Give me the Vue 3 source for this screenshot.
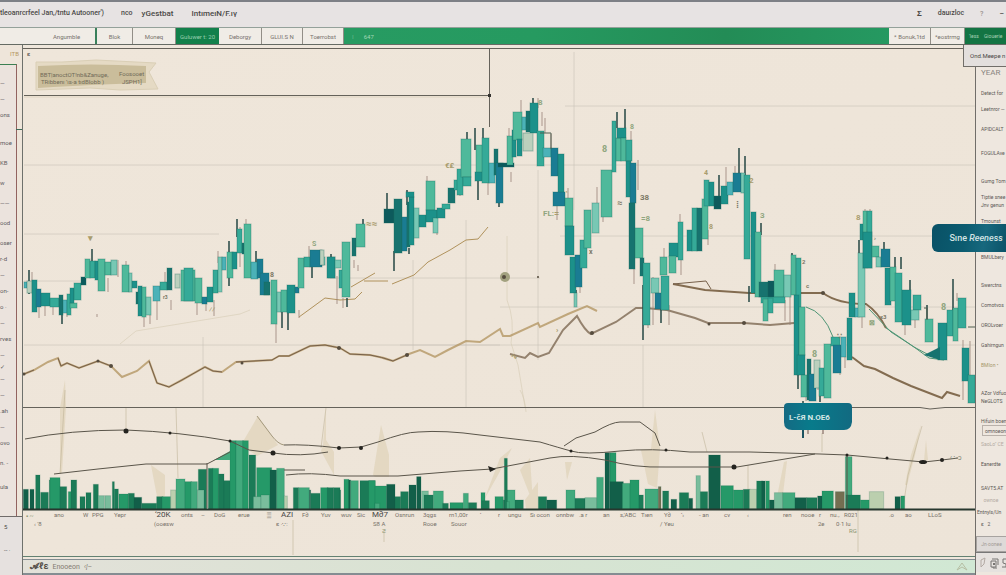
<script setup>
const tones = {
  d: '#17736f', t: '#1c918a', m: '#35aa98', g: '#4fb99b', l: '#78c8b4', p: '#bcd0bd',
  b: '#1a7c93', c: '#4bb2b8', e: '#2f9f7c', k: '#0d5a5c'
}

const parse = (source) =>
  source.trim().split(/\s*;\s*/).filter(Boolean).map((row) => {
    const [tone, ...n] = row.split(/[ ,]+/)
    return { tone, n: n.map(Number) }
  })

const candles = parse(`
c 24,282,3,6; p 27,281,5,12; t 32,280,5,32; b 36,289,5,18; t 41,293,9,13; m 50,298,9,9; d 59,295,4,20; c 63,300,4,13; m 67,294,4,21; g 70,303,7,5;
t 70,288,4,15; m 74,283,7,17; k 81,277,5,8; g 85,259,5,19; m 90,261,5,17; t 95,261,4,19; g 98,259,7,32; g 105,262,6,13; l 111,260,6,15; g 122,265,7,27; l 129,273,3,19;
t 132,281,5,7; d 136,292,5,12; t 138,286,4,30; g 142,287,4,30; l 146,297,5,18; c 153,286,7,15; m 160,282,7,8; d 167,268,5,22; p 175,274,5,14; g 181,270,14,31; m 184,268,9,33;
g 195,278,7,25; b 202,297,5,7; t 207,287,6,15; m 213,270,5,23; l 218,257,4,35; c 222,257,4,13; g 227,252,6,26; t 232,252,5,17; m 237,229,5,24; d 242,243,2,11; g 244,224,7,54;
c 251,262,7,17; b 257,259,6,19; b 260,273,9,22; d 264,282,6,13; g 271,280,6,44; l 277,292,4,20; g 281,290,6,22; t 287,285,8,28; b 295,287,4,6; g 298,258,6,30; m 304,257,6,10;
b 310,250,12,17; l 321,257,4,8; b 328,257,7,21; p 320,250,4,15; t 327,257,8,21; l 335,260,6,8; m 339,270,4,18; g 342,242,8,55; d 352,238,4,18; g 356,224,9,23; k 384,209,10,14;
d 394,199,8,54; b 402,217,5,34; d 407,202,3,45; t 409,197,5,48; t 406,192,8,5; l 414,208,5,30; t 419,215,7,12; g 426,181,9,29; t 426,210,11,12; l 433,218,5,15; t 437,208,8,10; m 442,204,8,5;
d 448,188,7,15; m 454,180,4,10; m 457,169,6,26; g 461,139,10,38; m 463,177,8,9; g 476,145,7,28; t 475,172,8,9; m 482,138,7,45; c 489,163,6,20; d 494,149,4,26; b 496,163,7,40; k 498,163,16,4;
g 507,136,6,29; t 512,130,4,27; g 513,112,9,28; t 517,139,5,17; c 522,117,4,13; d 526,111,5,21; t 530,103,8,30; p 523,133,10,18; m 537,131,7,35; c 543,148,8,9; b 551,148,7,28;
t 558,154,6,41; b 553,192,12,14; g 565,198,8,28; t 565,226,9,29; t 570,257,6,36; b 575,255,7,32; l 574,293,3,14; m 580,240,7,28; g 584,210,7,38; l 592,203,7,30; g 601,170,11,47;
m 612,121,4,51; g 616,138,5,23; t 617,128,9,10; g 621,138,5,23; m 626,140,6,21; t 626,161,5,36; b 630,163,6,40; d 629,203,6,66; g 635,228,8,30; d 640,258,4,18; m 643,263,7,62; l 651,278,8,15;
b 655,293,7,16; m 661,276,8,34; g 660,257,7,18; t 669,243,10,14; g 669,256,7,17; m 678,222,5,38; t 687,230,5,21; m 692,208,5,43; d 697,208,5,43; g 702,199,6,40; m 704,180,5,26;
t 709,182,5,24; k 714,196,7,13; t 721,186,7,18; c 727,182,6,13; b 733,173,8,19; l 741,173,4,20; m 744,175,6,84; t 751,212,5,81; g 755,232,6,65; d 759,282,9,15; k 768,281,6,16;
g 774,270,10,27; l 784,275,7,22; m 761,297,24,6; g 763,299,5,22; m 768,298,5,15; g 791,255,5,40; m 796,258,5,67; t 794,295,5,80; g 799,307,6,48; t 797,355,8,20; g 801,375,6,22;
d 807,359,4,41; b 809,374,7,27; p 814,360,6,28; m 819,368,5,28; g 824,344,7,54; m 831,337,9,9; b 833,345,8,28; c 841,337,5,20; t 847,318,5,42; t 849,293,6,24; c 855,308,5,9;
l 858,253,7,64; t 860,224,4,16; g 863,211,4,57; m 867,211,5,57; t 863,232,9,36; g 872,246,7,11; l 876,257,5,10; b 881,249,9,18; t 885,268,6,37; g 890,267,6,34; m 895,273,7,49;
t 902,290,9,35; m 913,295,8,15; l 911,310,8,10; g 925,319,8,23; t 938,323,9,37; m 947,310,6,26; g 953,308,5,33; m 958,298,8,30; t 962,348,7,33; m 968,375,7,28
`)

const wicks = parse(`
d 29,270,24; n 32,272,12; n 39,306,12; n 45,306,10; n 53,306,9; d 62,308,16; n 67,309,8; d 92,249,18; n 97,314,3; n 118,260,17; n 126,261,5; n 108,278,14; n 144,314,13; n 150,310,14; n 157,300,20;
n 165,272,17; n 171,300,10; n 197,300,15; n 206,302,9; n 214,300,16; n 218,251,12; d 229,241,45; d 237,219,18; n 240,227,40; n 246,219,6; d 256,251,12; n 276,322,21; d 282,310,18; d 288,312,18; n 299,310,8;
n 309,246,20; d 312,265,13; d 331,254,8; n 337,276,28; n 343,298,10; d 347,298,9; n 354,260,8; d 363,219,6; n 358,265,6; d 387,193,17; d 394,251,20; d 407,190,15; d 409,248,6; n 427,176,6; n 437,228,7; d 450,196,6;
d 467,132,8; n 460,188,8; d 475,128,22; d 478,180,20; d 483,128,12; n 488,181,14; d 499,195,12; n 511,172,10; n 509,128,9; n 521,100,12; d 533,98,8; n 538,98,10; n 542,112,14; n 545,118,15; n 551,134,14; n 557,200,20;
n 568,188,14; d 576,290,14; n 580,285,8; n 597,187,18; n 603,214,8; d 617,112,16; d 625,109,20; n 631,131,10; n 638,160,30; n 634,264,20; d 643,285,55; n 648,320,8; d 661,305,18; n 653,277,48; n 669,305,20;
n 664,248,10; n 680,214,8; n 681,260,15; n 708,230,15; d 719,175,34; d 739,148,28; d 745,156,22; n 726,167,20; n 735,166,10; d 761,223,12; d 749,286,16; n 775,264,10; n 785,300,21; n 790,275,50; d 792,253,30; d 798,374,15;
n 818,375,15; d 820,388,14; n 840,360,15; n 845,350,18; d 859,240,20; n 862,300,28; n 865,209,6; n 870,209,6; d 884,242,9; d 895,257,15; d 901,257,12; d 910,280,10; n 905,322,13; n 915,310,18; d 927,305,20;
d 953,279,35; n 957,293,8; n 963,340,60; n 970,341,40; d 803,401,37; n 806,389,12
`)

const notes = [
  [88, 241, '▾', 'y', 9], [163, 299, 'r3', 'q', 5], [270, 277, '8', 'q', 7], [312, 246, 'S', 'g', 7], [445, 168, '€₤', 'y', 8], [366, 227, '≈≈', 'y', 10],
  [538, 105, '8', 'g', 8], [543, 216, 'FL:', 'g', 8], [554, 217, '=', 'y', 9], [602, 152, '8', 'g', 9], [630, 129, '8', 'g', 7], [640, 200, '38', 'q', 8], [641, 221, '=8', 'g', 8], [617, 206, '≈', 'q', 9],
  [704, 175, '4', 'y', 7], [749, 183, '2', 'y', 8], [760, 218, '3', 'g', 8], [802, 264, '2', 'q', 6], [806, 288, 'c', 'q', 6], [812, 357, '8', 'g', 9], [837, 339, '∵', 'q', 8], [856, 220, '8', 'y', 8],
  [880, 319, 'x3', 'q', 6], [874, 240, '›', 'q', 6], [941, 310, '8', 'g', 9], [589, 254, 'x', 'q', 7], [566, 197, '‛', 'y', 7], [556, 332, '›', 'y', 8], [511, 359, '∿', 'y', 8], [209, 312, '⁄⁄', 'y', 7], [709, 229, '8', 'y', 7], [736, 208, '⁞', 'q', 9], [869, 325, '⊠', 'g', 7]
]

const bars = parse(`
K 70,15,298;K 90,12,298;D 107,13,255;D 122,23,307;D 148,32,270;M 150,30,263;D 180,20,290;M 205,10,305;D 213,17,270;D 240,15,320;D 258,15,308;D 280,15,283;L 295,18,317;L 315,17,317;D 337,6,275;D 343,12,297;M 357,28,312;D 385,18,310;K 402,23,322;
D 425,45,340;D 470,18,320;M 486,26,320;P 512,16,300;G 528,27,267;M 555,20,275;G 573,19,275;D 595,25,238;L 592,20,300;D 625,14,235;M 638,18,235;D 655,17,252;D 672,20,272;M 690,18,152;G 708,22,152;M 728,17,152;D 747,20,195;M 770,45,233;
K 810,20,240;G 830,23,235;L 760,23,320;L 783,25,315;P 853,9,318;D 880,16,293;G 896,32,293;K 928,4,300;D 932,28,310;M 962,22,293;D 982,18,293;D 1000,20,293;D 1018,4,300;
M 1032,15,268;K 1046,6,270;G 1052,23,272;D 1080,45,272;M 1106,20,272;M 1125,35,288;G 1125,14,340;K 1160,25,283;D 1185,17,320;D 1202,23,305;K 1227,21,285;K 1250,13,260;L 1265,20,303;D 1272,28,315;G 1300,30,303;D 1328,17,340;
M 1350,40,338;G 1390,15,310;D 1405,25,338;M 1443,12,308;D 1445,23,332;M 1485,25,320;D 1510,60,330;G 1520,25,300;D 1513,9,205;G 1520,8,335;D 1615,25,320;K 1640,30,330;G 1698,27,300;D 1725,30,325;L 1755,35,323;G 1790,20,262;M 1830,18,188;K 1815,14,188;
K 1830,40,275;G 1867,23,280;M 1890,27,270;D 1917,13,315;G 1935,40,297;N 1975,8,290;D 1988,18,303;K 2013,17,328;D 2038,28,308;K 2066,12,325;D 2095,28,305;L 2088,13,257;K 2126,35,195;M 2163,37,287;M 2200,30,300;D 2230,20,298;P 2248,22,298;
D 2270,18,273;K 2285,10,273;M 2297,11,273;K 2308,15,330;L 2323,25,308;G 2348,37,308;K 2385,35,323;D 2420,31,323;K 2453,13,318;M 2466,34,303;N 2506,27,305;G 2536,20,200;D 2538,43,315;M 2581,27,330;P 2608,43,305;K 2685,16,320;M 2703,11,318
`.replace(/\n/g, ''))
const barTones = { K: '#125f49', D: '#1b7b57', M: '#259968', G: '#42aa7d', L: '#79bd9c', P: '#bbcfae', N: '#746e51' }

const axis = [
  [54, 'ano'], [83, 'W'], [92, 'PPG'], [114, 'Yepr'], [155, '‘20K', 1], [181, 'onts'], [201, '–'], [214, 'DoG'], [238, 'erue'], [267, '▒'], [281, 'AZI', 1], [302, 'F∂'], [321, 'Yuv'],
  [341, 'wuv'], [357, 'Sic'], [372, 'M∂7', 1], [395, 'Osnrun'], [423, '3qgs'], [449, 'rn1,00r'], [480, '‘'], [498, 'r'], [508, 'ungu', 0], [530, 'Sı ocon'], [556, 'onnbw'], [579, '.a r'], [603, 'an'],
  [620, "s,'ABC"], [641, 'Tıen'], [664, 'Y∂'], [681, '‘›'], [699, '- an'], [724, 'cv'], [747, '‹'], [783, 'ren'], [801, 'nooe'], [819, 'r'], [830, 'nu.,'], [844, 'R021'], [889, '.o'], [905, 'ao'], [928, 'LLoS']
]
const subAxis = [[34, "‹ '8"], [154, '(ooesw'], [276, 'ε ·∵:'], [373, 'S8 A'], [423, 'Rooe'], [451, 'Souor'], [660, '/ Yeu'], [818, '2e'], [836, '0·1 lu']]

const leftRail = [
  ['—', 16], ['—', 16], ['ons', 28], ['moe', 20], ['KB', 20], ['w', 20], ['——', 20], ['ood', 20], ['oser', 16], ['r-d', 16], ['—', 16], ['on-', 16], ['o ·', 16], ['—', 16], ['rves', 16], ['—', 12], ['✓', 12], ['—', 16], ['—', 16],
  ['.ah', 16], ['—', 16], ['ovo', 20], ['n. -', 24], ['ula', 20]
]
const rightRail = [
  ['YEAR', 20], ['Detect for', 16], ['Leetnror —', 20], ['APIDCALT', 24], ['FOGULAve', 28], ['Gurng Tom', 16], ['Tiptie snee', 8], ['Jnv genun', 16], ['Tmounst', 36], ['BMULbery', 28],
  ['Swerctns', 20], ['Comotvos', 20], ['OROLvoer', 20], ['Gahirngun', 20], ['BMIon  •', 28], ['AZor Vdfuo', 8], ['NeGLOTS', 20], ['Hifuin boen', 8]
]
const leftTabs = ['Angumble', 'Blok', 'Moneq', 'Guluwer t: 20', 'Deborgy', 'GLUI.S N', 'Toerrobst']
</script>

<template>
  <div class="app">
    <header class="title">
      <nav class="menu" aria-label="Workspace">
        <a href="#" class="path">tleoanrcrfeel Jan,/tntu Autooner')</a>
        <a href="#">nco</a>
        <a href="#" class="wide">yGestbat</a>
        <a href="#" class="wide">IntımeıN/F.ıγ</a>
      </nav>
      <div class="tools">
        <button type="button" aria-label="Sum">&#x1D6BA;</button>
        <a href="#">dauızloc</a>
        <button type="button" class="faint">?</button>
        <button type="button" aria-label="Minimize">–</button>
      </div>
    </header>

    <div class="tabs">
      <button v-for="(tab, i) in leftTabs" :key="tab" type="button" :class="['tab', 'tab' + i]">{{ tab }}</button>
      <div class="band"><span>⁞</span><span>647</span></div>
      <button type="button" class="tab result">* Bonuk,1td</button>
      <button type="button" class="tab meeting">*eostrmg</button>
      <button type="button" class="tab share"><span>'less</span><span>Giouerie</span></button>
    </div>

    <div class="body">
      <aside class="left">
        <div class="corner">ITB</div>
        <ul>
          <li v-for="([label, h], i) in leftRail" :key="i" :class="'h' + h">{{ label }}</li>
        </ul>
        <div class="left-end"><span>5</span><span>-- ·</span></div>
      </aside>

      <main>
        <svg class="chart" viewBox="23 48 952 508" role="img" aria-label="Price chart with volume">
          <defs>
            <linearGradient id="paper" x2="1" y2="1"><stop stop-color="#efe6da" /><stop offset="1" stop-color="#ede4d8" /></linearGradient>
            <linearGradient id="pill"><stop stop-color="#146a83" /><stop offset=".4" stop-color="#087b8b" /><stop offset="1" stop-color="#126a81" /></linearGradient>
          </defs>
          <rect x="23" y="48" width="952" height="508" fill="url(#paper)" />

          <g class="grid">
            <path d="M24 234H219M24 281H80M24 345H500M24 165H975M565 106H975M560 236H975M400 345H975M330 278H540M500 307H975M466 220V407M538 170V360M574 52V210M413 260V350M203 337V407M643 345V407" />
            <path class="warm" d="M24 97H487M120 344L136 331L240 314L250 310M507 236V300Q515 320 511 343L518 365L525 407M520 390Q525 398 526 412" />
          </g>

          <g class="frame">
            <path d="M23 48.500H965M24 95.500H489M489.500 49V127M23 407.500H920L930 409L945 407.500H975M23 509.500H975" />
            <rect x="488" y="94" width="3" height="3" />
          </g>

          <path class="ribbon" d="M36 62H62L96 60L156 63L149 72L158 89L120 90L90 88L36 90Z" />
          <path class="ribbon-core" d="M38 66Q90 63 146 66V83Q100 84 38 88Z" />
          <text class="ribbon-text" x="40" y="77">BBT|anoctOT!nb&amp;Zanuge,</text>
          <text class="ribbon-text" x="41" y="84">TRibbenı ’ıs-a tıdBIobb )</text>
          <text class="ribbon-text" x="119" y="76">Foosooet</text>
          <text class="ribbon-text" x="122" y="84">JSPH1]</text>
          <text x="27" y="56" class="speck">ε</text>

          <g class="trend">
            <path class="gold wide" d="M24 374L34 370L48 362L58 358L61 366L67 363L79 368L98 361L111 366L122 377L137 371L149 361L157 383L169 387L182 380L205 367L213 371L222 372L236 362L272 360L279 356L289 356L310 346L325 345L340 348L350 354L370 355Q382 357 393 361L409 354L420 350L435 357L448 350L466 341L480 342L500 329L503 336L510 336L538 323L540 327L568 314L587 306L597 311" />
            <path class="dark" d="M24 374L34 370M58 358L61 366L67 363L79 368L98 361L111 366M149 361L157 383L169 387L182 380L205 367L213 371L222 372M236 362L272 360L279 356L289 356L310 346L325 345L340 348L350 354L370 355Q382 357 393 361L409 354" />
            <path class="gold" d="M299 317L310 309L325 298L340 300L355 299L362 292M351 287L375 273M364 281H388M392 284L414 275L428 262L450 250L466 240L478 239L488 227" />
            <path class="dark wide" d="M510 354L525 358L530 353L538 357L549 353L563 330L577 316Q585 331 591 334L616 322L636 308H645L667 310L695 318L708 323L744 323L770 325L794 323" />
            <path class="dark heavy" d="M673 284L705 290L749 293H823Q838 304 866 304Q878 312 886 328M852 357L864 366L875 369L893 378L911 386L942 398L947 392L960 396" />
            <path class="dark" d="M673 284L706 281L711 289" />
            <path class="green" d="M806 307Q824 312 833 337M886 328L901 338L914 347L929 355M869 309L891 332L914 347L929 358L944 360" />
          </g>

          <g class="wicks">
            <line v-for="(w, i) in wicks" :key="i" :x1="w.n[0]" :x2="w.n[0]" :y1="w.n[1]" :y2="w.n[1] + w.n[2]" :class="w.tone" />
          </g>
          <g class="candles">
            <rect v-for="(c, i) in candles" :key="i" :x="c.n[0]" :y="c.n[1]" :width="c.n[2]" :height="c.n[3]" :fill="tones[c.tone]" />
            <path fill="#17736f" stroke="none" d="M924 355L940 347V360Z" />
          </g>
          <path class="thin" d="M540 133H551V149M924 308H927V320M968 327H975" />
          <g class="notes">
            <text v-for="([x, y, mark, tone, size], i) in notes" :key="i" :x="x" :y="y" :font-size="size" :class="tone">{{ mark }}</text>
          </g>
          <g class="dots">
            <circle cx="505" cy="277" r="5" fill="#a2a17f" /><circle cx="504" cy="277" r="2" />
            <circle cx="538" cy="277" r="1" /><circle cx="24" cy="374" r="1.500" /><circle cx="98" cy="361" r="1.500" /><circle cx="111" cy="366" r="2" />
            <circle cx="242" cy="363" r="1.500" /><circle cx="339" cy="348" r="2" /><circle cx="407" cy="355" r="2" /><circle cx="592" cy="333" r="2" /><circle cx="823" cy="293" r="2" /><circle cx="744" cy="323" r="2" /><circle cx="709" cy="324" r="1.500" />
          </g>

          <g class="sails">
            <path d="M60 408L65 380L66 407L62 473H60ZM151 465L165 475V495L159 507ZM241 445L258 416L278 445L257 456ZM323 445L326 408V440L334 452V475L321 451ZM373 475L381 425L389 455V477H375ZM484 500L500 458L512 448L498 475ZM520 470L530 458L533 503ZM565 462H572L567 480ZM525 500L538 482V509H526ZM641 450L651 449L655 410L660 449L657 488L648 484ZM776 502L784 462L787 461L782 502ZM905 485L911 455L921 425L915 455L907 485ZM924 461L926 440L928 460Z" />
            <path class="stem" d="M65 390L60 474M126 408V431M176 408L178 478M326 408L321 448M702 432L707 452M822 433V452M922 426L908 475L903 508M748 465V490M858 508V552M293 520V555M384 530V542" />
          </g>

          <g class="bars">
            <rect v-for="(b, i) in bars" :key="i" :x="b.n[0] / 3" :y="b.n[2] / 3 + 390" :width="b.n[1] / 3" :height="119 - b.n[2] / 3" :fill="barTones[b.tone]" />
            <path fill="#42aa7d" d="M214 460L230 451V460Z" />
          </g>

          <g class="index">
            <path d="M25 439Q70 430 126 430Q180 432 230 441L249 450L273 453Q300 457 328 452M284 445Q305 444 339 448L361 447L378 442Q405 432 418 432Q445 430 480 435L540 442Q560 448 571 451Q583 455 620 451Q650 448 690 452H750L820 454L847 455L890 459L924 462L942 460L958 458M54 474L98 469L146 464L207 464L230 452M284 470H305M286 475Q310 472 340 476H398L460 471L492 469L550 458Q570 454 605 460Q635 468 665 467L737 467L815 454M564 446L576 438L595 432Q612 422 620 422H640L655 433L660 446M207 463V508M847 455V509" />
            <path class="tan" d="M257 416L272 436Q278 444 284 445" />
            <g fill="#24231f"><circle cx="126" cy="431" r="2.500" /><circle cx="170" cy="433" r="1.500" /><circle cx="230" cy="441" r="1.500" /><circle cx="273" cy="453" r="2.500" /><circle cx="339" cy="448" r="2" /><circle cx="361" cy="448" r="2" /><path d="M488 466L496 469L490 472Z" /><circle cx="571" cy="451" r="1.500" /><circle cx="666" cy="450" r="1.500" /><circle cx="734" cy="467" r="2.500" /><circle cx="847" cy="455" r="1.500" /><circle cx="887" cy="458" r="1.500" /><ellipse cx="923" cy="462" rx="4" ry="2" /><circle cx="942" cy="460" r="2" /></g>
            <text x="950" y="460">‹∴·ɔ</text>
          </g>
          <path class="base" d="M23 509.500H975" />

          <g class="axis">
            <text v-for="([x, label, big], i) in axis" :key="i" :x="x" y="517" :class="{ big }">{{ label }}</text>
            <text v-for="([x, label], i) in subAxis" :key="'s' + i" :x="x" y="526">{{ label }}</text>
            <text x="382" y="533" class="moss">Ƨ</text><text x="849" y="533" class="moss">RG</text><text x="26" y="518" class="moss">▪ ~</text>
          </g>

          <path d="M788 403H848Q852 403 852 407V422Q851 430 844 430H792Q784 430 784 422V407Q784 403 788 403Z" fill="url(#pill)" />
          <path d="M803 430V438" stroke="#1c5360" stroke-width="2" /><path d="M808 430V434M823 430V434" stroke="#70564f" />
          <text x="789" y="420" class="pill-text">L-&#x10D;Я N.OE6</text>
        </svg>
        <footer><b>𝓐ℓε</b><span>Enooeon</span><i>‹¦–</i><svg viewBox="0 0 12 9"><path d="M1 8L6 1L11 8L6 5Z" /></svg></footer>
      </main>

      <aside class="right">
        <ul>
          <li v-for="([label, h], i) in rightRail" :key="i" :class="['h' + h, { first: i === 0, moss: label.startsWith('BMIo') }]">{{ label }}</li>
        </ul>
        <button type="button" class="field">omnoeon</button>
        <ul class="tail">
          <li class="h20 pale">SaoLo" CE</li>
          <li class="h24">Eanerdte</li>
          <li class="h12">SAVT5.AT</li>
          <li class="h12 pale">&nbsp; ownoe</li>
          <li class="h12">Entnyls/Un</li>
          <li class="h16">ε &nbsp; 2</li>
        </ul>
        <button type="button" class="send">Jn·oonee</button>
        <div class="icons">
          <svg viewBox="0 0 31 20"><path class="soft" d="M5 7L9 5L8 11L5 14Z" /><path d="M15 8H20V14H15ZM16 6H22V12M17 10L19 12M17 12L19 10M17 14V15H21" /><path d="M31 6H27V10L30 11V14H26" /></svg>
        </div>
      </aside>

      <div class="popup">Ond.Meepe n</div>
      <button type="button" class="reveal">Sıne <i>Reeness</i></button>
    </div>
  </div>
</template>

<style>
html, body { margin: 0; background: #e9e2da; overflow: hidden; }
</style>

<style scoped>
* { box-sizing: border-box; }
.app { width: 100%; font-family: "Liberation Sans Narrow", Roboto, "Liberation Sans", sans-serif; color: #4b4947; }
button { font: inherit; color: inherit; margin: 0; padding: 0; border: 0; background: none; white-space: nowrap; }
a { color: inherit; text-decoration: none; }
ul { margin: 0; padding: 0; list-style: none; }
.title { display: flex; justify-content: space-between; height: 27px; border-top: 2px solid #7d8086; background: #e7e3e3; font-size: 7px; line-height: 23px; overflow: hidden; white-space: nowrap; }
.menu { display: flex; gap: 9px; font-weight: 500; }
.menu .wide { font-size: 8px; }
.menu a:nth-child(3) { width: 41px; }
.path { width: 112px; }
.tools { display: flex; gap: 16px; padding-right: 2px; font-weight: 500; }
.faint { color: #99928d; }
.tabs { display: flex; height: 18px; border-top: 1px solid #94a19a; border-bottom: 1px solid #656b64; background: #efeae2; font-size: 6px; overflow: hidden; }
.tab { flex: none; width: 43px; border-right: 1px solid #928e87; background: #f0ece6; color: #77726d; }
.tab0 { width: 97px; padding-left: 38px; border-right: 2px solid #39805b; }
.tab1 { width: 36px; }
.tab3 { background: #12804b; color: #99cfaf; border: 0; }
.tab5, .tab6 { width: 41px; }
.band { flex: 1; display: flex; gap: 10px; padding-left: 8px; align-items: center; background: linear-gradient(90deg, #279b62, #269a60 35%, #238c56 70%, #259961); color: #a3d6b5; }
.result { width: 42px; }
.meeting { width: 34px; }
.share { display: flex; gap: 5px; align-items: center; width: 41px; padding-left: 4px; background: #137443; color: #a7d2b5; border: 0; font-size: 5px; }
.body { position: relative; display: grid; grid-template-columns: 23px minmax(0, 1fr) 31px; }
.left { display: flex; flex-direction: column; padding-top: 3px; border-right: 1px solid #6e716c; background: #eee5da; overflow: hidden; font-size: 6px; }
.corner { height: 16px; padding-left: 10px; line-height: 12px; color: #b69661; }
.left ul { position: relative; width: 17px; height: 452px; padding-top: 10px; border-top: 1px solid #3b8052; border-right: 1px solid #926360; background: #ebe3dd; }
.left ul::after { content: ""; position: absolute; top: 64px; left: 16px; width: 7px; height: 1px; background: #3f6a58; }
.left li { overflow: hidden; line-height: 16px; white-space: nowrap; color: #605c5d; }
.left-end { flex: 1; display: flex; flex-direction: column; gap: 16px; padding: 6px 4px; border-top: 1px solid #706b69; background: #e6e1df; }
.h8 { height: 8px; }
.h12 { height: 12px; }
.h16 { height: 16px; }
.h20 { height: 20px; }
.h24 { height: 24px; }
.h28 { height: 28px; }
.h36 { height: 36px; }
main { display: flex; flex-direction: column; padding-top: 3px; background: #efe7dc; min-width: 0; }
.chart { display: block; width: 100%; height: auto; border-bottom: 1px solid #638171; }
footer { display: flex; gap: 4px; align-items: center; height: 16px; margin-top: 2px; padding: 0 7px; border: solid #848d92; border-width: 1px 0 2px; background: linear-gradient(90deg, #e3e1d9, #d7e3d2 50%, #d1e8d4); font-size: 7px; color: #837c72; }
footer b { font-size: 9px; color: #57504a; }
footer svg { width: 12px; height: 9px; margin-left: auto; fill: none; stroke: #b6bea3; }
.right { border-left: 1px solid #716e6a; background: #eee7df; overflow: hidden; white-space: nowrap; font-size: 5px; color: #5c5855; }
.right ul { padding: 24px 0 0 5px; }
.right li { line-height: 8px; }
.right .first { font-size: 8px; color: #8a8581; }
.right .moss { color: #a5986a; }
.right .pale { color: #b3aaa2; }
.field { display: block; width: 32px; height: 11px; margin-left: 6px; border: 1px solid #b9b1aa; text-align: left; padding-left: 2px; }
.right .tail { padding-top: 4px; }
.right .tail li:nth-child(5) { margin-left: -4px; }
.send { display: block; width: 31px; height: 16px; border: 1px solid #a7a3a0; background: #dedad8; color: #a29b97; }
.icons { height: 20px; border-top: 1px solid #777; background: #e6e2df; }
.icons svg { display: block; width: 31px; height: 20px; fill: none; stroke: #777572; }
.icons .soft { stroke: #b3aaa4; }
.popup { position: absolute; top: 0; right: 0; width: 43px; height: 22px; padding: 0 0 0 6px; border: solid #716e69; border-width: 0 0 1px 1px; background: #e3dfdd; font-size: 6px; line-height: 21px; white-space: nowrap; }
.reveal { position: absolute; top: 179px; right: 0; width: 74px; height: 28px; padding-left: 14px; border-radius: 6px 0 0 6px; background: linear-gradient(100deg, #095166, #0c5c70 45%, #17687e 70%, #0b5368); color: #d4e4e4; font-size: 9px; font-weight: 500; }
.grid path { fill: none; stroke: #c9c3b7; stroke-width: 1px; opacity: 0.6; }
.grid .warm { stroke: #d6cbb4; }
.frame path { fill: none; stroke: #65625a; }
.frame rect { fill: #34322f; }
.ribbon { fill: #e5dac4; stroke: #dacfb6; }
.ribbon-core { fill: #cabd9b; }
.ribbon-text { font-size: 6px; fill: #716b59; }
.speck { font-size: 6px; fill: #474440; }
.trend path { fill: none; stroke-width: 1px; }
.trend .gold { stroke: #b0925c; }
.trend .dark { stroke: #76604a; }
.trend .wide { stroke-width: 2px; opacity: 0.75; }
.trend .heavy { stroke-width: 2px; stroke: #836c50; }
.trend .green { stroke: #4f9575; }
.candles rect { stroke: #17685f; stroke-opacity: 0.35; stroke-width: 1px; }
.wicks line { stroke: #9a8378; stroke-opacity: 0.8; }
.wicks .d { stroke: #31504c; stroke-width: 2px; }
.thin { fill: none; stroke: #515f50; }
.notes text { fill: #7b7865; font-weight: 700; }
.notes .y { fill: #a89c6d; }
.notes .g { fill: #90a57e; }
.dots { fill: #564c3e; }
.sails path { fill: #d9cbac; opacity: 0.5; }
.sails .stem { fill: none; stroke: #b7ab8e; }
.bars rect { stroke: #105b44; stroke-opacity: 0.2; stroke-width: 1px; }
.index > path { fill: none; stroke: #5a554a; }
.index > .tan { stroke: #a3987c; }
.index text { font-size: 7px; fill: #7c8475; }
.base { stroke: #27372e; stroke-width: 2px; }
.axis text { font-size: 6px; fill: #777169; }
.axis .big { font-size: 8px; fill: #474747; }
.axis .moss { fill: #8c9672; }
.pill-text { fill: #d4e7e6; font-size: 8px; font-weight: 700; }
</style>
